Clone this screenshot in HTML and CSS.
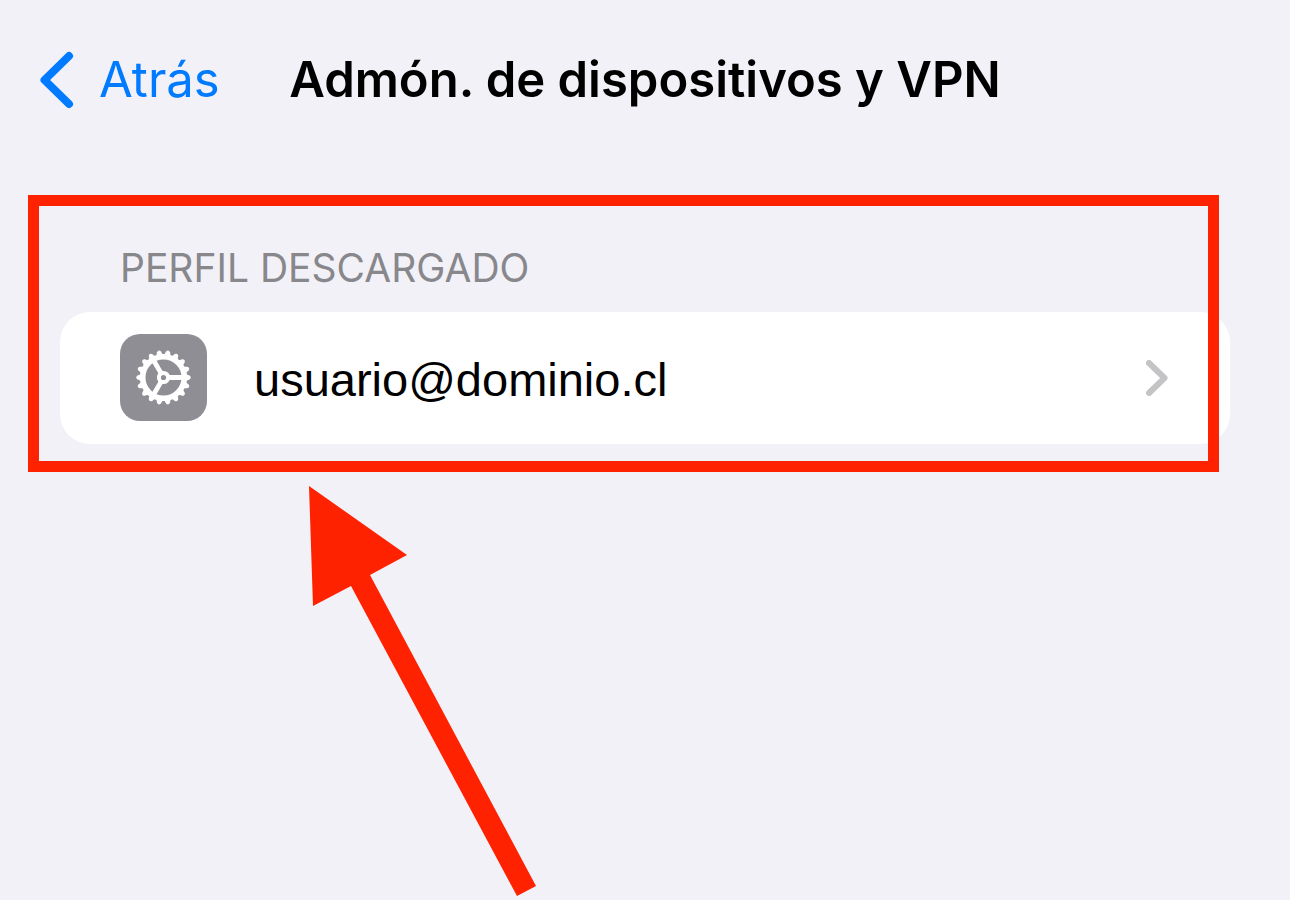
FILE: index.html
```html
<!DOCTYPE html>
<html lang="es">
<head>
<meta charset="utf-8">
<meta name="viewport" content="width=device-width, initial-scale=1">
<title>Admón. de dispositivos y VPN</title>
<link rel="stylesheet" href="styles.css">
</head>
<body>
<header class="navbar">
  <a class="back" href="#">
    <svg class="back-icon" viewBox="0 0 34 58" aria-hidden="true"><path d="M29 5 4.500 29 29 53"/></svg>
    <span>Atrás</span>
  </a>
  <h1 class="title">Admón. de dispositivos y VPN</h1>
</header>
<main class="content">
  <section class="group" aria-labelledby="group-title">
    <h2 class="group-title" id="group-title">PERFIL DESCARGADO</h2>
    <a class="row" href="#">
      <svg class="gear" viewBox="-43.500 -43.500 87 87" aria-hidden="true">
        <defs>
          <path id="t" d="M22 -3.500 L26 -2 Q28.600 0 26 2 L22 3.500Z"/>
          <g id="t3"><use href="#t"/><use href="#t" transform="rotate(20)"/><use href="#t" transform="rotate(40)"/></g>
        </defs>
        <g fill="#fff">
          <use href="#t3"/><use href="#t3" transform="rotate(60)"/><use href="#t3" transform="rotate(120)"/>
          <use href="#t3" transform="rotate(180)"/><use href="#t3" transform="rotate(240)"/><use href="#t3" transform="rotate(300)"/>
        </g>
        <g fill="none" stroke="#fff">
          <circle r="20.800" stroke-width="5.600"/>
          <circle r="4.600" stroke-width="4"/>
          <path d="M5 0H20M-2.500 4.330-10 17.320M-2.500-4.330-10-17.320" stroke-width="4.800"/>
        </g>
      </svg>
      <span class="row-label">usuario@dominio.cl</span>
      <svg class="chevron" viewBox="0 0 24 36" aria-hidden="true"><path d="M3 3 18.500 18 3 33"/></svg>
    </a>
    <div class="highlight"></div>
    <svg class="arrow" viewBox="0 0 228 412" aria-hidden="true"><path d="M0 0 98 69 61 89 227 400 208 410 42 100 4 120Z"/></svg>
  </section>
</main>
</body>
</html>
```
FILE: styles.css
```css
* {
  box-sizing: border-box;
}

body {
  margin: 0;
  min-height: 100vh;
  background: #f2f1f7;
  color: #000;
  font-family: Inter, "Liberation Sans", sans-serif;
}

a {
  color: inherit;
  text-decoration: none;
}

.navbar {
  display: grid;
  grid-template-columns: 1fr auto 1fr;
  align-items: center;
  padding: 50px 40px 0;
}

.back {
  display: flex;
  align-items: center;
  gap: 25px;
  color: #007aff;
  font-size: 49px;
  line-height: 60px;
}

.back-icon {
  width: 34px;
  height: 58px;
  fill: none;
  stroke: currentColor;
  stroke-width: 8;
  stroke-linecap: round;
  stroke-linejoin: round;
}

.title {
  margin: 0;
  font-size: 49px;
  font-weight: 600;
  line-height: 60px;
}

.content {
  padding: 134px 60px 0;
}

.group {
  position: relative;
}

.group-title {
  margin: 0;
  padding: 0 60px 20px;
  color: #87878c;
  font-size: 39px;
  font-weight: 400;
  line-height: 48px;
}

.row {
  display: flex;
  align-items: center;
  padding: 22px 60px 23px;
  border-radius: 30px;
  background: #fff;
}

.gear {
  width: 87px;
  height: 87px;
  border-radius: 20px;
  background: #8f8e94;
}

.row-label {
  flex: 1;
  padding: 4px 0 0 47px;
  font-family: "Liberation Sans", Arial, sans-serif;
  font-size: 47px;
  line-height: 60px;
}

.chevron {
  width: 24px;
  height: 36px;
  fill: none;
  stroke: #c4c4c6;
  stroke-width: 6;
  stroke-linecap: round;
  stroke-linejoin: round;
}

.highlight {
  position: absolute;
  inset: -49px 11px -28px -32px;
  border: 11px solid #ff2200;
  pointer-events: none;
}

.arrow {
  position: absolute;
  top: 242px;
  left: 249px;
  width: 228px;
  height: 412px;
  fill: #ff2200;
  pointer-events: none;
}
```
